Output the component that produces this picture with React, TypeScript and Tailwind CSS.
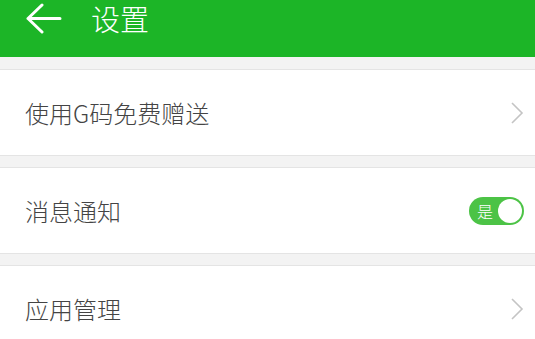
import React from 'react';

const font = { fontFamily: '"Noto Sans CJK SC", Roboto, sans-serif' };

function Chevron() {
  return (
    <svg width="14" height="24" viewBox="0 0 14 24" fill="none">
      <path d="M2 2 L12 12 L2 22" stroke="#c4c4c4" strokeWidth="1.6" />
    </svg>
  );
}

function Row({ label, right }: { label: string; right: React.ReactNode }) {
  return (
    <div className="flex h-[87px] items-center justify-between border-y border-[#e4e4e4] bg-white pl-[25px] pr-[11px]">
      <span className="text-[24px] font-light text-[#444444]">{label}</span>
      {right}
    </div>
  );
}

export default function App() {
  return (
    <div className="h-[339px] w-[535px] overflow-hidden bg-[#f3f3f3]" style={font}>
      <div className="flex h-[57px] items-start bg-[#1cb527] pl-[26px] pt-[3px]">
        <svg width="36" height="32" viewBox="0 0 36 32" fill="none">
          <path d="M2 15.5 H34 M16 2 L2 15.5 L16 29" stroke="white" strokeWidth="3" strokeLinecap="round" strokeLinejoin="round" />
        </svg>
        <span className="ml-[29px] text-[29px] font-light leading-[30px] text-white">设置</span>
      </div>
      <div className="flex flex-col gap-[11px] pt-[12px]">
        <Row label="使用G码免费赠送" right={<Chevron />} />
        <Row
          label="消息通知"
          right={
            <div className="flex h-[28px] w-[55px] items-center justify-between rounded-full bg-[#4cc346] pl-[8px] pr-[2px]">
              <span className="text-[16px] font-light leading-none text-white">是</span>
              <span className="h-[24px] w-[24px] rounded-full bg-white" />
            </div>
          }
        />
        <Row label="应用管理" right={<Chevron />} />
      </div>
    </div>
  );
}
